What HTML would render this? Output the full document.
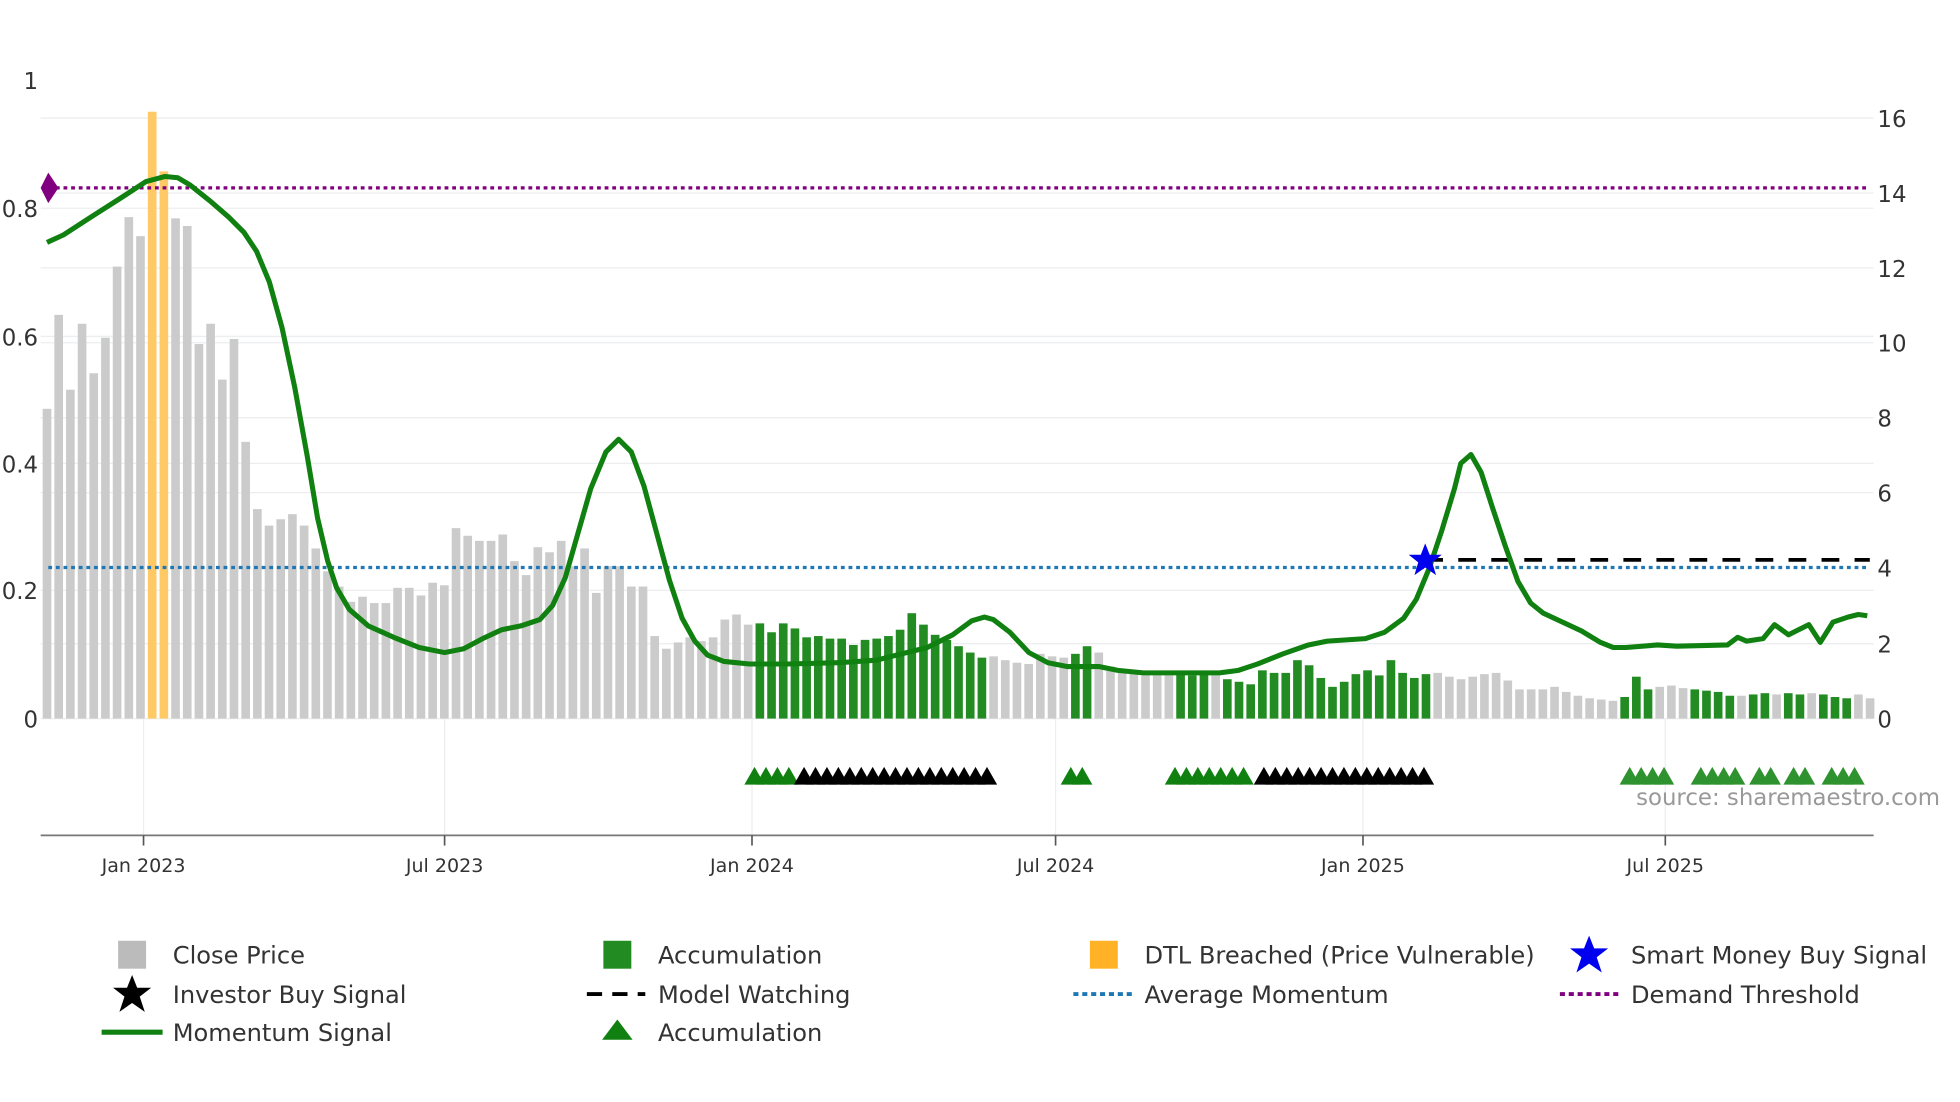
<!DOCTYPE html>
<html><head><meta charset="utf-8"><style>
html,body{margin:0;padding:0;background:#fff;}
svg{display:block;}
text{font-family:"DejaVu Sans","Liberation Sans",sans-serif;}
</style></head><body>
<svg id="c" width="1960" height="1102" viewBox="0 0 1543 868" preserveAspectRatio="none" xmlns="http://www.w3.org/2000/svg">
<g stroke="#eceef0" stroke-width="1">
<line x1="32" y1="93" x2="1475" y2="93"/><line x1="32" y1="152" x2="1475" y2="152"/>
<line x1="32" y1="164" x2="1475" y2="164"/><line x1="32" y1="211" x2="1475" y2="211"/>
<line x1="32" y1="265" x2="1475" y2="265"/><line x1="32" y1="270" x2="1475" y2="270"/>
<line x1="32" y1="329" x2="1475" y2="329"/><line x1="32" y1="365" x2="1475" y2="365"/>
<line x1="32" y1="388" x2="1475" y2="388"/><line x1="32" y1="465" x2="1475" y2="465"/>
<line x1="32" y1="507" x2="1475" y2="507"/><line x1="32" y1="566" x2="1475" y2="566"/>
<line x1="113" y1="566" x2="113" y2="658"/><line x1="350" y1="566" x2="350" y2="658"/>
<line x1="592" y1="566" x2="592" y2="658"/><line x1="831" y1="566" x2="831" y2="658"/>
<line x1="1073" y1="566" x2="1073" y2="658"/><line x1="1311" y1="566" x2="1311" y2="658"/>
</g>
<g id="bars"></g>
<line x1="38" y1="148" x2="1472" y2="148" stroke="#800080" stroke-width="2.5" stroke-dasharray="3,3"/>
<path d="M32 148 L38 136 L46 148 L38 160Z" fill="#800080"/>
<line x1="38" y1="447" x2="1472" y2="447" stroke="#1f77b4" stroke-width="2.5" stroke-dasharray="3,3"/>
<line x1="1122" y1="441" x2="1472" y2="441" stroke="#000" stroke-width="3" stroke-dasharray="14,12"/>
<path fill="none" stroke="#108010" stroke-width="4" stroke-linejoin="round" d="M37 191 L50 185 L70 172 L95 156 L115 143 L130 139 L140 140 L150 146 L165 158 L180 171 L192 183 L202 198 L212 222 L222 258 L232 305 L242 360 L250 408 L258 442 L265 463 L275 480 L290 493 L310 502 L330 510 L350 514 L365 511 L380 503 L395 496 L410 493 L425 488 L435 477 L445 455 L455 420 L465 385 L477 356 L487 346 L497 356 L507 383 L517 420 L527 457 L537 487 L547 505 L557 516 L570 521 L590 523 L620 523 L660 522 L690 520 L710 515 L730 510 L750 500 L765 489 L775 486 L782 488 L795 498 L810 514 L825 522 L840 525 L865 525 L880 528 L900 530 L930 530 L960 530 L975 528 L990 523 L1010 515 L1030 508 L1045 505 L1075 503 L1090 498 L1105 487 L1115 472 L1125 448 L1135 418 L1145 385 L1150 365 L1158 358 L1166 372 L1175 400 L1185 430 L1195 458 L1205 475 L1215 483 L1230 490 L1245 497 L1260 506 L1270 510 L1280 510 L1305 508 L1320 509 L1360 508 L1368 502 L1375 505 L1388 503 L1397 492 L1408 500 L1424 492 L1433 506 L1443 490 L1455 486 L1463 484 L1470 485"/>
<path d="M1122 428 L1125.5 437 L1135 437 L1127.5 443 L1130.5 453 L1122 447 L1113.5 453 L1116.5 443 L1109 437 L1118.5 437Z" fill="#0000ee"/>
<g id="tri"></g>
<line x1="32" y1="658" x2="1475" y2="658" stroke="#777" stroke-width="1.3"/>
<g stroke="#555" stroke-width="1.3"><line x1="113" y1="658" x2="113" y2="666"/><line x1="350" y1="658" x2="350" y2="666"/><line x1="592" y1="658" x2="592" y2="666"/><line x1="831" y1="658" x2="831" y2="666"/><line x1="1073" y1="658" x2="1073" y2="666"/><line x1="1311" y1="658" x2="1311" y2="666"/></g>
<g font-size="15" fill="#333" text-anchor="middle">
<text x="113" y="687">Jan 2023</text><text x="350" y="687">Jul 2023</text><text x="592" y="687">Jan 2024</text><text x="831" y="687">Jul 2024</text><text x="1073" y="687">Jan 2025</text><text x="1311" y="687">Jul 2025</text>
</g>
<g font-size="18" fill="#333" text-anchor="end">
<text x="30" y="70">1</text><text x="30" y="171">0.8</text><text x="30" y="272">0.6</text><text x="30" y="372">0.4</text><text x="30" y="472">0.2</text><text x="30" y="573">0</text>
</g>
<g font-size="18" fill="#333">
<text x="1478" y="100">16</text><text x="1478" y="159">14</text><text x="1478" y="218">12</text><text x="1478" y="277">10</text><text x="1478" y="336">8</text><text x="1478" y="395">6</text><text x="1478" y="454">4</text><text x="1478" y="514">2</text><text x="1478" y="573">0</text>
</g>
<text x="1288" y="634" font-size="18" fill="#999">source: sharemaestro.com</text>
<g font-size="19" fill="#333">
<rect x="93" y="741" width="22" height="22" fill="#bbb"/><text x="136" y="759">Close Price</text>
<rect x="475" y="741" width="22" height="22" fill="#228b22"/><text x="518" y="759">Accumulation</text>
<rect x="858" y="741" width="22" height="22" fill="#ffa500" opacity="0.85"/><text x="901" y="759">DTL Breached (Price Vulnerable)</text>
<path d="M1251 737 L1255 747 L1266 747 L1257 754 L1261 766 L1251 759 L1241 766 L1245 754 L1236 747 L1247 747Z" fill="#0000ee"/><text x="1284" y="759">Smart Money Buy Signal</text>
<path d="M104 768 L108 778 L119 778 L110 785 L114 797 L104 790 L94 797 L98 785 L89 778 L100 778Z" fill="#000"/><text x="136" y="790">Investor Buy Signal</text>
<line x1="462" y1="783" x2="508" y2="783" stroke="#000" stroke-width="3" stroke-dasharray="12,8"/><text x="518" y="790">Model Watching</text>
<line x1="845" y1="783" x2="891" y2="783" stroke="#1f77b4" stroke-width="3" stroke-dasharray="4,3"/><text x="901" y="790">Average Momentum</text>
<line x1="1228" y1="783" x2="1274" y2="783" stroke="#800080" stroke-width="3" stroke-dasharray="4,3"/><text x="1284" y="790">Demand Threshold</text>
<line x1="80" y1="813" x2="128" y2="813" stroke="#108010" stroke-width="4"/><text x="136" y="820">Momentum Signal</text>
<path d="M474 819 L486 803 L498 819Z" fill="#108010"/><text x="518" y="820">Accumulation</text>
</g>
</svg>
<script>
var tops=[322,248,307,255,294,266,210,171,186,88,135,172,178,271,255,299,267,348,401,414,409,405,414,432,450,462,474,470,475,475,463,463,469,459,461,416,422,426,426,421,442,453,431,435,426,446,432,467,446,446,462,462,501,511,506,502,505,502,488,484,492,491,498,491,495,502,501,503,503,508,504,503,501,496,483,492,500,504,509,514,518,517,520,522,523,515,517,518,515,509,514,525,528,530,532,532,532,530,532,530,532,535,537,539,528,530,530,520,524,534,541,537,531,528,532,520,530,534,531,530,533,535,533,531,530,536,543,543,543,541,545,548,550,551,552,549,533,543,541,540,542,543,544,545,548,548,547,546,547,546,547,546,547,549,550,547,550];
var g=document.getElementById('bars'),s='';
var green=[[590,775],[838,857],[921,949],[957,1123],[1279,1306],[1334,1370],[1380,1398],[1407,1426],[1435,1462]];
for(var i=0;i<tops.length;i++){var x=37+i*9.2;var c='#cbcbcb';
for(var k=0;k<green.length;k++)if(x>=green[k][0]&&x<=green[k][1])c='#228b22';
if(i==9||i==10)c='#ffc966';
s+='<rect x="'+(x-3.4)+'" y="'+tops[i]+'" width="6.8" height="'+(566-tops[i])+'" fill="'+c+'"/>';}
g.innerHTML=s;
var t=document.getElementById('tri'),u='';
function run(a,b,c){for(var x=a;x<=b;x+=9){u+='<path d="M'+(x-8)+' 618 L'+x+' 604 L'+(x+8)+' 618Z" fill="'+c+'"/>';}}
run(594,624,'#108010');run(633,777,'#000');run(843,858,'#108010');run(925,983,'#108010');run(995,1126,'#000');run(1283,1310,'#2e922e');run(1339,1370,'#2e922e');run(1385,1398,'#2e922e');run(1412,1425,'#2e922e');run(1442,1465,'#2e922e');
t.innerHTML=u;
</script>
</body></html>
